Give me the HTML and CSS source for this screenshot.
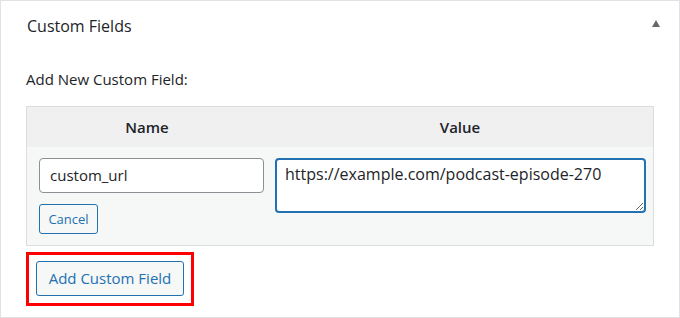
FILE: index.html
```html
<!DOCTYPE html>
<html>
    <head>
        <meta charset="UTF-8">
        <meta name="viewport" content="width=device-width, initial-scale=1.0">
        <title>Custom Fields</title>
        <link rel="stylesheet" href="styles.css">
    </head>
    <body>
        <div class="postbox">
            <div class="postbox-header">
                <h2 class="postbox-title">Custom Fields</h2>
                <span class="toggle-arrow"></span>
            </div>
            <div class="inside">
                <p class="add-title">Add New Custom Field:</p>
                <table class="meta-table">
                    <thead>
                        <tr>
                            <th class="col-name">Name</th>
                            <th class="col-value">Value</th>
                        </tr>
                    </thead>
                    <tbody>
                        <tr>
                            <td class="cell-name">
                                <input class="meta-key" type="text" value="custom_url">
                                <button class="btn btn-small">Cancel</button>
                            </td>
                            <td class="cell-value">
                                <textarea class="meta-value">https://example.com/podcast-episode-270</textarea>
                            </td>
                        </tr>
                    </tbody>
                </table>
                <div class="submit-wrap">
                    <button class="btn btn-add">Add Custom Field</button>
                </div>
            </div>
        </div>
    </body>
</html>
```

FILE: styles.css
```css
* {
    margin: 0;
    padding: 0;
    box-sizing: border-box;
}
body {
    font-family: "Open Sans", "Noto Sans", sans-serif;
    color: #1d2327;
    background-color: #fff;
}
.postbox {
    width: 680px;
    height: 318px;
    border: 1px solid #e2e2e4;
    background-color: #fff;
}
.postbox-header {
    display: flex;
    justify-content: space-between;
    align-items: center;
    height: 49px;
    padding: 0 19px 0 26px;
}
.postbox-title {
    font-size: 16px;
    font-weight: 400;
}
.toggle-arrow {
    width: 0;
    height: 0;
    border-left: 4px solid transparent;
    border-right: 4px solid transparent;
    border-bottom: 7px solid #646970;
    margin-top: -4px;
}
.inside {
    padding: 0 26px 0 25px;
}
.add-title {
    font-size: 15px;
    margin-top: 19px;
    height: 37px;
}
.meta-table {
    width: 627px;
    border: 1px solid #dcdcde;
    border-collapse: collapse;
    background-color: #f6f7f7;
}
.meta-table th {
    background-color: #f0f0f1;
    font-size: 15px;
    font-weight: 600;
    height: 40px;
    text-align: center;
}
.col-name {
    width: 240px;
}
.cell-name {
    vertical-align: top;
    padding: 11px 3px 11px 12px;
}
.cell-value {
    vertical-align: top;
    padding: 11px 7px 11px 8px;
}
.meta-key {
    display: block;
    width: 225px;
    height: 35px;
    border: 1px solid #8c8f94;
    border-radius: 4px;
    padding: 0 10px;
    font-family: inherit;
    font-size: 15px;
    color: #1d2327;
    background-color: #fff;
}
.meta-value {
    display: block;
    width: 371px;
    height: 55px;
    border: 2px solid #2271b1;
    border-radius: 4px;
    padding: 2px 8px;
    font-family: inherit;
    font-size: 16px;
    line-height: 24px;
    color: #1d2327;
    background-color: #fff;
    outline: none;
}
.btn {
    font-family: inherit;
    color: #2271b1;
    background-color: #f6f7f7;
    border: 1px solid #2271b1;
    border-radius: 3px;
}
.btn-small {
    display: block;
    margin-top: 11px;
    width: 59px;
    height: 30px;
    font-size: 13px;
}
.submit-wrap {
    display: inline-block;
    margin-top: 6px;
    border: 3px solid #f00;
    padding: 6px 7px 7px 7px;
}
.btn-add {
    display: block;
    width: 148px;
    height: 35px;
    font-size: 15px;
}
```
